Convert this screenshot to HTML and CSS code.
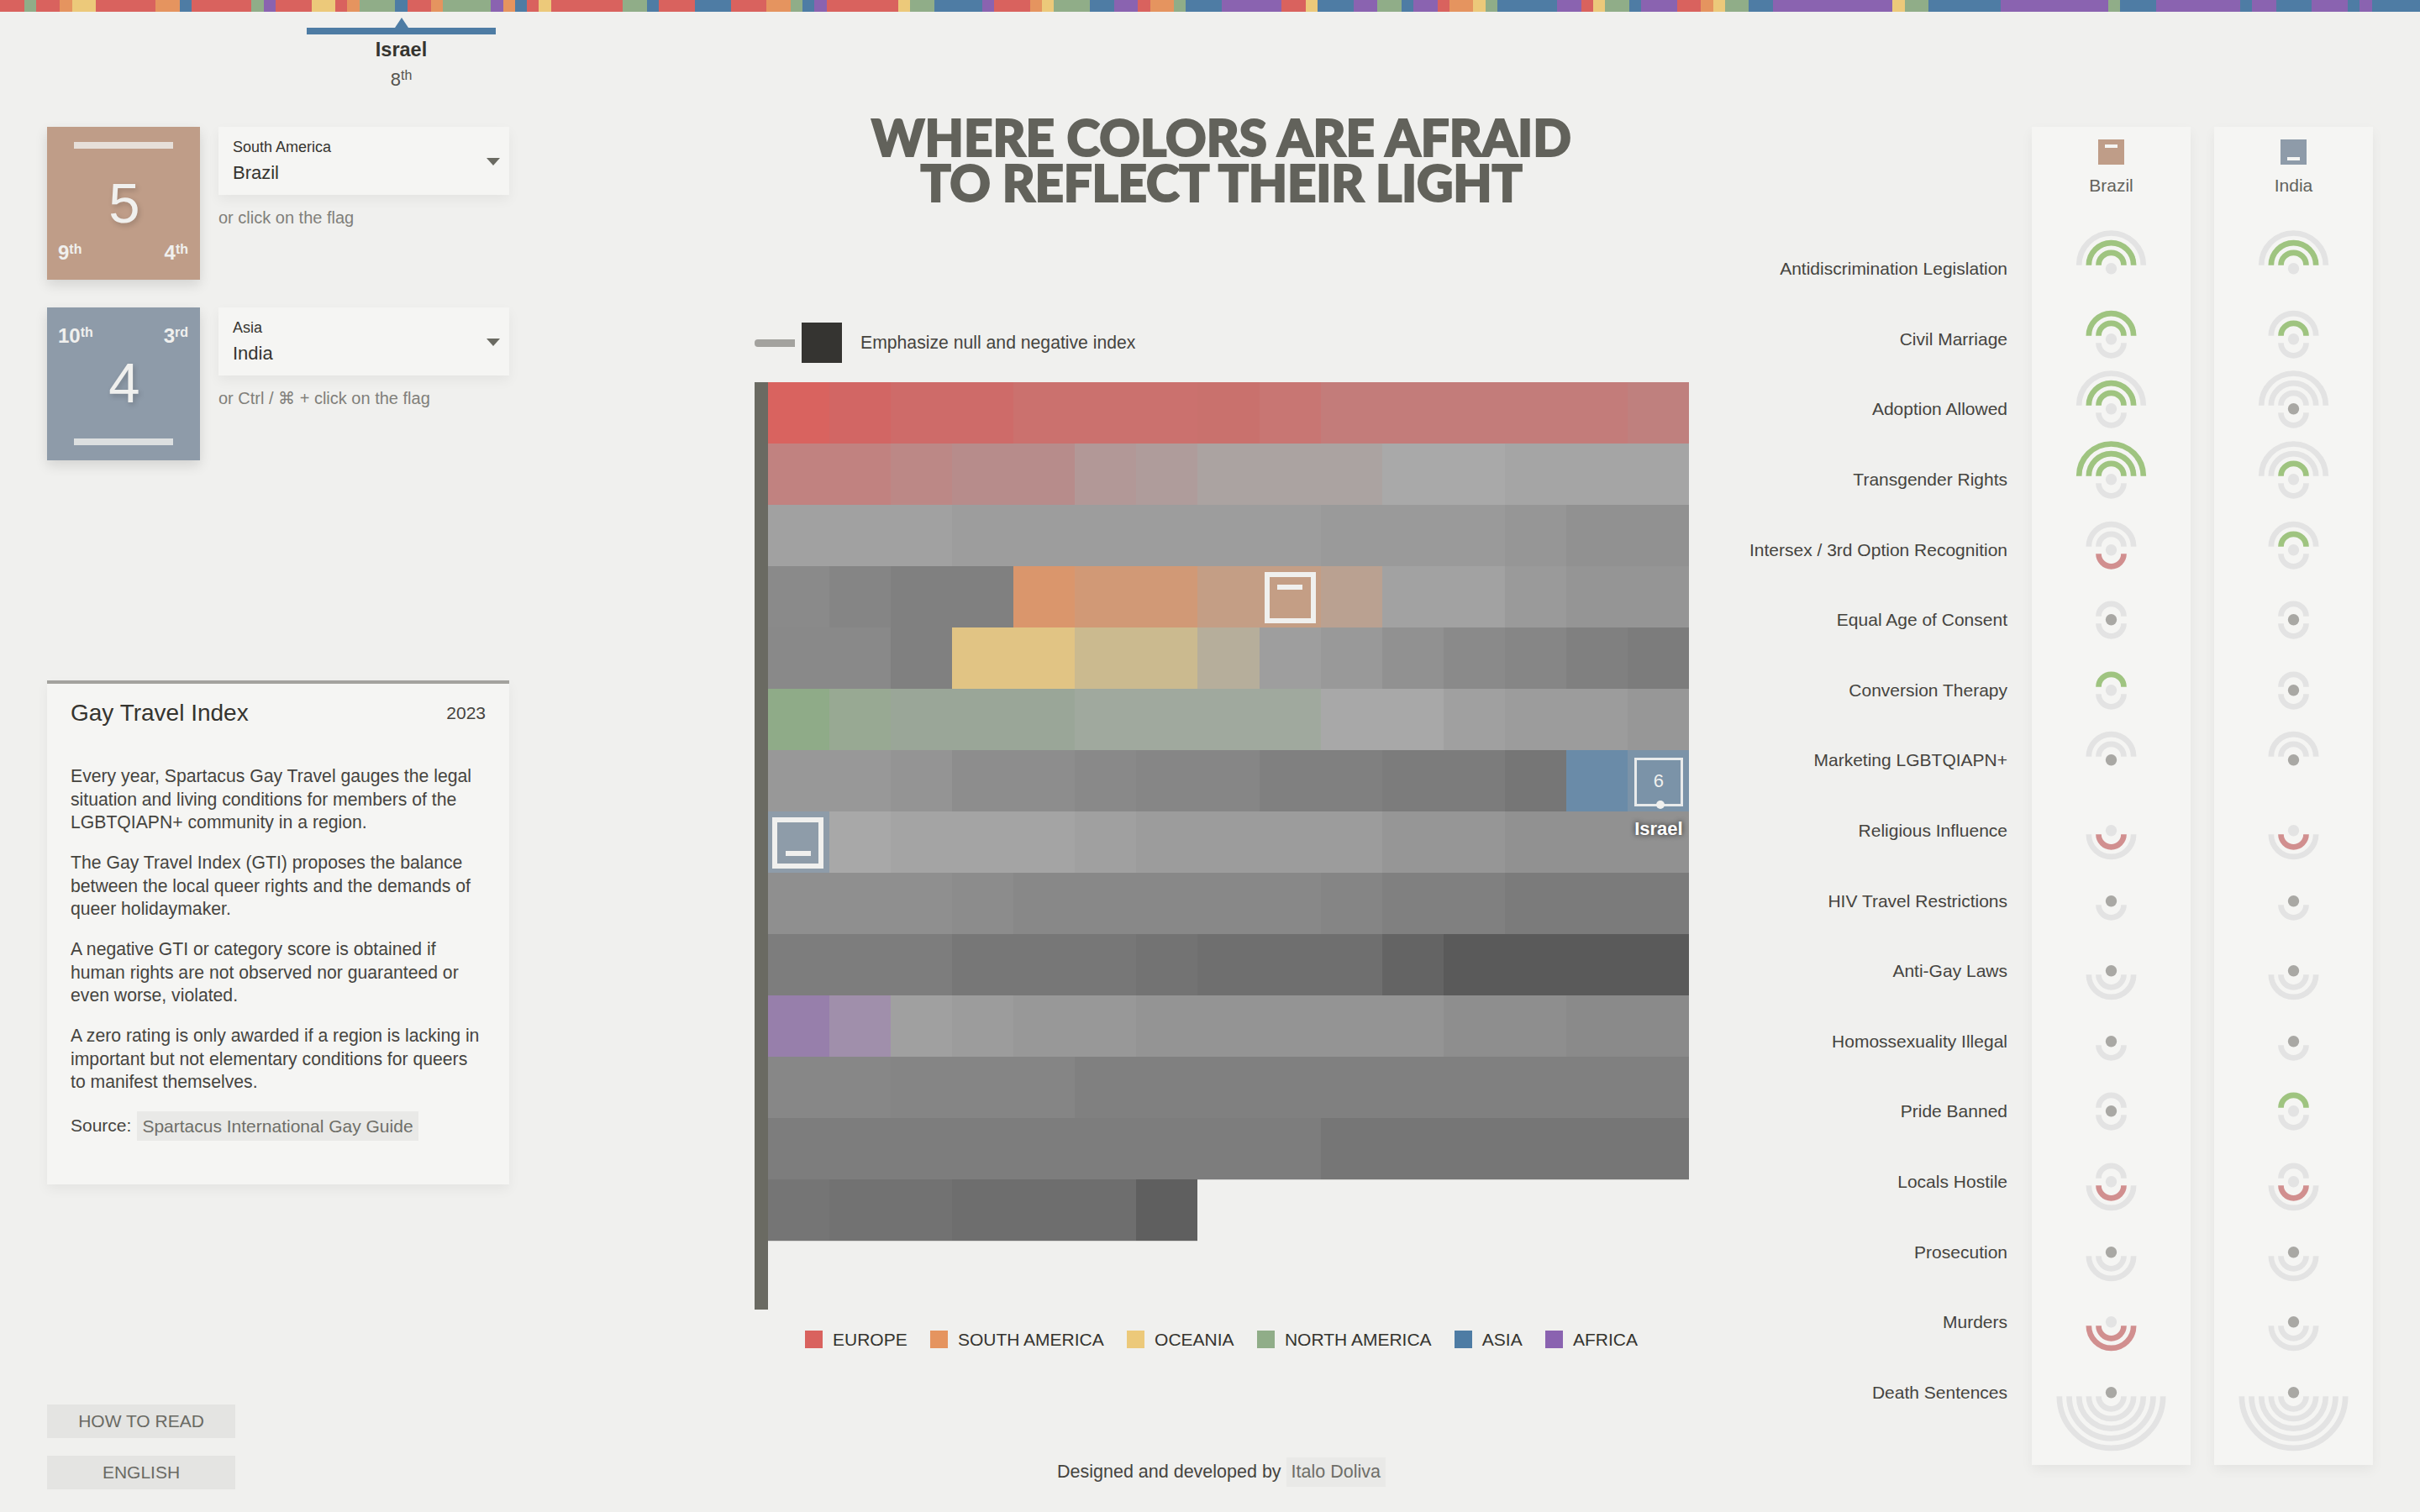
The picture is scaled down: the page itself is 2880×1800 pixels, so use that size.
FILE: index.html
```html
<!DOCTYPE html>
<html lang="en">
<head>
<meta charset="utf-8">
<title>Where colors are afraid to reflect their light</title>
<link rel="stylesheet" href="styles.css">
</head>
<body>
<svg class="defs" aria-hidden="true"><defs>
<path id="u1" d="M-15-4A15 15 0 0 1 15-4"/><path id="u2" d="M-26.67-4A26.67 26.67 0 0 1 26.67-4"/><path id="u3" d="M-38.33-4A38.33 38.33 0 0 1 38.33-4"/>
<path id="d1" d="M-15 4.5A15 15 0 0 0 15 4.5"/><path id="d2" d="M-26.67 4.5A26.67 26.67 0 0 0 26.67 4.5"/><path id="d3" d="M-38.33 4.5A38.33 38.33 0 0 0 38.33 4.5"/><path id="d4" d="M-50 4.5A50 50 0 0 0 50 4.5"/><path id="d5" d="M-61.67 4.5A61.67 61.67 0 0 0 61.67 4.5"/>
</defs></svg>

<div class="stripe">
<i class="r" style="flex-grow:2"></i><i class="g" style="flex-grow:1"></i><i class="r" style="flex-grow:2"></i><i class="o" style="flex-grow:1"></i><i class="y" style="flex-grow:2"></i><i class="r" style="flex-grow:5"></i><i class="o" style="flex-grow:2"></i><i class="b" style="flex-grow:1"></i><i class="r" style="flex-grow:5"></i><i class="g" style="flex-grow:1"></i><i class="p" style="flex-grow:1"></i><i class="r" style="flex-grow:3"></i><i class="y" style="flex-grow:2"></i><i class="r" style="flex-grow:1"></i><i class="o" style="flex-grow:1"></i><i class="g" style="flex-grow:3"></i><i class="b" style="flex-grow:1"></i><i class="r" style="flex-grow:2"></i><i class="o" style="flex-grow:1"></i><i class="g" style="flex-grow:4"></i><i class="p" style="flex-grow:1"></i><i class="o" style="flex-grow:1"></i><i class="b" style="flex-grow:1"></i><i class="r" style="flex-grow:1"></i><i class="y" style="flex-grow:1"></i><i class="r" style="flex-grow:6"></i><i class="g" style="flex-grow:2"></i><i class="b" style="flex-grow:1"></i><i class="r" style="flex-grow:3"></i><i class="b" style="flex-grow:3"></i><i class="r" style="flex-grow:3"></i><i class="o" style="flex-grow:2"></i><i class="g" style="flex-grow:1"></i><i class="b" style="flex-grow:1"></i><i class="p" style="flex-grow:1"></i><i class="r" style="flex-grow:6"></i><i class="y" style="flex-grow:1"></i><i class="g" style="flex-grow:2"></i><i class="b" style="flex-grow:4"></i><i class="p" style="flex-grow:1"></i><i class="r" style="flex-grow:3"></i><i class="o" style="flex-grow:1"></i><i class="y" style="flex-grow:1"></i><i class="g" style="flex-grow:3"></i><i class="b" style="flex-grow:2"></i><i class="p" style="flex-grow:2"></i><i class="r" style="flex-grow:1"></i><i class="o" style="flex-grow:2"></i><i class="g" style="flex-grow:1"></i><i class="b" style="flex-grow:3"></i><i class="p" style="flex-grow:5"></i><i class="r" style="flex-grow:2"></i><i class="y" style="flex-grow:1"></i><i class="b" style="flex-grow:3"></i><i class="p" style="flex-grow:2"></i><i class="g" style="flex-grow:2"></i><i class="b" style="flex-grow:1"></i><i class="p" style="flex-grow:2"></i><i class="r" style="flex-grow:1"></i><i class="o" style="flex-grow:2"></i><i class="y" style="flex-grow:1"></i><i class="g" style="flex-grow:1"></i><i class="b" style="flex-grow:5"></i><i class="p" style="flex-grow:2"></i><i class="r" style="flex-grow:1"></i><i class="y" style="flex-grow:1"></i><i class="g" style="flex-grow:2"></i><i class="b" style="flex-grow:1"></i><i class="p" style="flex-grow:3"></i><i class="r" style="flex-grow:2"></i><i class="o" style="flex-grow:1"></i><i class="y" style="flex-grow:1"></i><i class="g" style="flex-grow:2"></i><i class="b" style="flex-grow:2"></i><i class="p" style="flex-grow:10"></i><i class="y" style="flex-grow:1"></i><i class="g" style="flex-grow:2"></i><i class="b" style="flex-grow:6"></i><i class="p" style="flex-grow:9"></i><i class="g" style="flex-grow:1"></i><i class="b" style="flex-grow:3"></i><i class="p" style="flex-grow:7"></i><i class="b" style="flex-grow:1"></i><i class="p" style="flex-grow:2"></i><i class="b" style="flex-grow:3"></i><i class="p" style="flex-grow:3"></i><i class="b" style="flex-grow:1"></i><i class="p" style="flex-grow:1"></i><i class="b" style="flex-grow:4"></i>
</div>

<div class="marker">
  <div class="marker-tip"></div>
  <div class="marker-bar"></div>
  <div class="marker-name">Israel</div>
  <div class="marker-rank">8<sup>th</sup></div>
</div>

<main class="page">
  <aside class="left">
    <div class="pick">
      <div class="card card-a">
        <div class="card-dash"></div>
        <div class="card-num">5</div>
        <div class="card-ranks"><span>9<sup>th</sup></span><span>4<sup>th</sup></span></div>
      </div>
      <div class="pick-side">
        <div class="select"><div><div class="select-group">South America</div><div class="select-value">Brazil</div></div><div class="select-arrow"></div></div>
        <div class="hint">or click on the flag</div>
      </div>
    </div>
    <div class="pick pick-second">
      <div class="card card-b">
        <div class="card-ranks"><span>10<sup>th</sup></span><span>3<sup>rd</sup></span></div>
        <div class="card-num">4</div>
        <div class="card-dash"></div>
      </div>
      <div class="pick-side">
        <div class="select"><div><div class="select-group">Asia</div><div class="select-value">India</div></div><div class="select-arrow"></div></div>
        <div class="hint">or Ctrl / ⌘ + click on the flag</div>
      </div>
    </div>
    <section class="info">
      <header class="info-head"><h2>Gay Travel Index</h2><span>2023</span></header>
      <p>Every year, Spartacus Gay Travel gauges the legal situation and living conditions for members of the LGBTQIAPN+ community in a region.</p>
      <p>The Gay Travel Index (GTI) proposes the balance between the local queer rights and the demands of queer holidaymaker.</p>
      <p>A negative GTI or category score is obtained if human rights are not observed nor guaranteed or even worse, violated.</p>
      <p>A zero rating is only awarded if a region is lacking in important but not elementary conditions for queers to manifest themselves.</p>
      <div class="source">Source: <span class="chip">Spartacus International Gay Guide</span></div>
    </section>
    <div class="btn btn-first">HOW TO READ</div>
    <div class="btn">ENGLISH</div>
  </aside>

  <section class="center">
    <h1>WHERE COLORS ARE AFRAID<br><span class="title-second">TO REFLECT THEIR LIGHT</span></h1>
    <div class="toggle"><div class="toggle-track"></div><div class="toggle-knob"></div><span>Emphasize null and negative index</span></div>
    <div class="chart">
      <div class="axis"></div>
      <div class="grid">
<i style="background:#d9635f"></i><i style="background:#d26664"></i><i style="background:#ce6b69"></i><i style="background:#ce6b69"></i><i style="background:#cb716e"></i><i style="background:#cb716e"></i><i style="background:#cb716e"></i><i style="background:#c9716d"></i><i style="background:#c87673"></i><i style="background:#c37c7a"></i><i style="background:#c37c7a"></i><i style="background:#c37c7a"></i><i style="background:#c37c7a"></i><i style="background:#c37c7a"></i><i style="background:#bf807e"></i>
<i style="background:#c18280"></i><i style="background:#c18280"></i><i style="background:#bc8886"></i><i style="background:#b78c8b"></i><i style="background:#b78c8b"></i><i style="background:#b29897"></i><i style="background:#af9c9b"></i><i style="background:#aba3a1"></i><i style="background:#aba3a1"></i><i style="background:#aba3a1"></i><i style="background:#a9a9a9"></i><i style="background:#a9a9a9"></i><i style="background:#a5a5a5"></i><i style="background:#a5a5a5"></i><i style="background:#a5a5a5"></i>
<i style="background:#a1a1a1"></i><i style="background:#a1a1a1"></i><i style="background:#a1a1a1"></i><i style="background:#9d9d9d"></i><i style="background:#9d9d9d"></i><i style="background:#9d9d9d"></i><i style="background:#9d9d9d"></i><i style="background:#9d9d9d"></i><i style="background:#9d9d9d"></i><i style="background:#9a9a9a"></i><i style="background:#9a9a9a"></i><i style="background:#9a9a9a"></i><i style="background:#969696"></i><i style="background:#919191"></i><i style="background:#919191"></i>
<i style="background:#8a8a8a"></i><i style="background:#858585"></i><i style="background:#808080"></i><i style="background:#808080"></i><i style="background:#da966c"></i><i style="background:#d19976"></i><i style="background:#d19976"></i><i style="background:#c49e85"></i><i style="background:#c49e85"><span class="flag flag-a"><b></b></span></i><i style="background:#baa191"></i><i style="background:#a2a2a2"></i><i style="background:#a2a2a2"></i><i style="background:#9a9a9a"></i><i style="background:#959595"></i><i style="background:#959595"></i>
<i style="background:#898989"></i><i style="background:#898989"></i><i style="background:#808080"></i><i style="background:#e1c484"></i><i style="background:#e1c484"></i><i style="background:#cbba8f"></i><i style="background:#cbba8f"></i><i style="background:#b6ae9b"></i><i style="background:#9e9e9e"></i><i style="background:#999999"></i><i style="background:#919191"></i><i style="background:#8a8a8a"></i><i style="background:#868686"></i><i style="background:#808080"></i><i style="background:#7c7c7c"></i>
<i style="background:#8fab88"></i><i style="background:#98a993"></i><i style="background:#9aa698"></i><i style="background:#9aa698"></i><i style="background:#9aa698"></i><i style="background:#a0a99e"></i><i style="background:#a0a99e"></i><i style="background:#a0a99e"></i><i style="background:#a0a99e"></i><i style="background:#a8a8a8"></i><i style="background:#a8a8a8"></i><i style="background:#a0a0a0"></i><i style="background:#9c9c9c"></i><i style="background:#9c9c9c"></i><i style="background:#979797"></i>
<i style="background:#989898"></i><i style="background:#989898"></i><i style="background:#949494"></i><i style="background:#8d8d8d"></i><i style="background:#8d8d8d"></i><i style="background:#898989"></i><i style="background:#868686"></i><i style="background:#868686"></i><i style="background:#808080"></i><i style="background:#808080"></i><i style="background:#7c7c7c"></i><i style="background:#7c7c7c"></i><i style="background:#767676"></i><i style="background:#6a8ba8"></i><i style="background:#7b93a8"><span class="hover-box">6</span><span class="hover-dot"></span><span class="hover-name">Israel</span></i>
<i style="background:#8e9ca9"><span class="flag flag-b"><b></b></span></i><i style="background:#a8a8a8"></i><i style="background:#a4a4a4"></i><i style="background:#a4a4a4"></i><i style="background:#a4a4a4"></i><i style="background:#a0a0a0"></i><i style="background:#9c9c9c"></i><i style="background:#9c9c9c"></i><i style="background:#9c9c9c"></i><i style="background:#9c9c9c"></i><i style="background:#969696"></i><i style="background:#969696"></i><i style="background:#919191"></i><i style="background:#919191"></i><i style="background:#919191"></i>
<i style="background:#8f8f8f"></i><i style="background:#8f8f8f"></i><i style="background:#8f8f8f"></i><i style="background:#8c8c8c"></i><i style="background:#888888"></i><i style="background:#888888"></i><i style="background:#888888"></i><i style="background:#888888"></i><i style="background:#888888"></i><i style="background:#858585"></i><i style="background:#808080"></i><i style="background:#808080"></i><i style="background:#7b7b7b"></i><i style="background:#7b7b7b"></i><i style="background:#7b7b7b"></i>
<i style="background:#7d7d7d"></i><i style="background:#7d7d7d"></i><i style="background:#7d7d7d"></i><i style="background:#777777"></i><i style="background:#777777"></i><i style="background:#777777"></i><i style="background:#737373"></i><i style="background:#6f6f6f"></i><i style="background:#6f6f6f"></i><i style="background:#6f6f6f"></i><i style="background:#646464"></i><i style="background:#5a5a5a"></i><i style="background:#5a5a5a"></i><i style="background:#5a5a5a"></i><i style="background:#5a5a5a"></i>
<i style="background:#977fab"></i><i style="background:#a08fab"></i><i style="background:#a0a0a0"></i><i style="background:#9c9c9c"></i><i style="background:#989898"></i><i style="background:#989898"></i><i style="background:#949494"></i><i style="background:#949494"></i><i style="background:#949494"></i><i style="background:#949494"></i><i style="background:#949494"></i><i style="background:#8e8e8e"></i><i style="background:#8e8e8e"></i><i style="background:#8a8a8a"></i><i style="background:#8a8a8a"></i>
<i style="background:#878787"></i><i style="background:#878787"></i><i style="background:#858585"></i><i style="background:#858585"></i><i style="background:#858585"></i><i style="background:#808080"></i><i style="background:#808080"></i><i style="background:#808080"></i><i style="background:#808080"></i><i style="background:#808080"></i><i style="background:#808080"></i><i style="background:#808080"></i><i style="background:#808080"></i><i style="background:#808080"></i><i style="background:#808080"></i>
<i style="background:#7d7d7d"></i><i style="background:#7d7d7d"></i><i style="background:#7d7d7d"></i><i style="background:#7d7d7d"></i><i style="background:#7d7d7d"></i><i style="background:#7d7d7d"></i><i style="background:#7d7d7d"></i><i style="background:#7d7d7d" class="end"></i><i style="background:#7d7d7d" class="end"></i><i style="background:#767676" class="end"></i><i style="background:#767676" class="end"></i><i style="background:#767676" class="end"></i><i style="background:#767676" class="end"></i><i style="background:#767676" class="end"></i><i style="background:#767676" class="end"></i>
<i style="background:#757575" class="end"></i><i style="background:#727272" class="end"></i><i style="background:#727272" class="end"></i><i style="background:#6e6e6e" class="end"></i><i style="background:#6e6e6e" class="end"></i><i style="background:#6e6e6e" class="end"></i><i style="background:#5f5f5f" class="end"></i>
      </div>
    </div>
    <div class="legend">
      <span class="lg"><i class="r"></i>EUROPE</span><span class="lg"><i class="o"></i>SOUTH AMERICA</span><span class="lg"><i class="y"></i>OCEANIA</span><span class="lg"><i class="g"></i>NORTH AMERICA</span><span class="lg"><i class="b"></i>ASIA</span><span class="lg"><i class="p"></i>AFRICA</span>
    </div>
    <footer class="credit">Designed and developed by <span class="chip">Italo Doliva</span></footer>
  </section>

  <section class="right">
    <div class="labels">
      <div>Antidiscrimination Legislation</div><div>Civil Marriage</div><div>Adoption Allowed</div><div>Transgender Rights</div><div>Intersex / 3rd Option Recognition</div><div>Equal Age of Consent</div><div>Conversion Therapy</div><div>Marketing LGBTQIAPN+</div><div>Religious Influence</div><div>HIV Travel Restrictions</div><div>Anti-Gay Laws</div><div>Homossexuality Illegal</div><div>Pride Banned</div><div>Locals Hostile</div><div>Prosecution</div><div>Murders</div><div>Death Sentences</div>
    </div>
    <div class="column">
      <div class="col-head"><div class="mini mini-a"><b></b></div><div class="col-name">Brazil</div></div>
      <svg class="glyph" viewBox="-94.5 -41.8 189 83.6"><use href="#u3"/><use href="#u2" class="pos"/><use href="#u1" class="pos"/><circle r="6.7"/></svg>
      <svg class="glyph" viewBox="-94.5 -41.8 189 83.6"><use href="#u2" class="pos"/><use href="#u1" class="pos"/><use href="#d1"/><circle r="6.7"/></svg>
      <svg class="glyph" viewBox="-94.5 -41.8 189 83.6"><use href="#u3"/><use href="#u2" class="pos"/><use href="#u1" class="pos"/><use href="#d1"/><circle r="6.7"/></svg>
      <svg class="glyph" viewBox="-94.5 -41.8 189 83.6"><use href="#u3" class="pos"/><use href="#u2" class="pos"/><use href="#u1" class="pos"/><use href="#d1"/><circle r="6.7"/></svg>
      <svg class="glyph" viewBox="-94.5 -41.8 189 83.6"><use href="#u2"/><use href="#u1"/><use href="#d1" class="neg"/><circle r="6.7"/></svg>
      <svg class="glyph" viewBox="-94.5 -41.8 189 83.6"><use href="#u1"/><use href="#d1"/><circle class="zero" r="6.7"/></svg>
      <svg class="glyph" viewBox="-94.5 -41.8 189 83.6"><use href="#u1" class="pos"/><use href="#d1"/><circle r="6.7"/></svg>
      <svg class="glyph" viewBox="-94.5 -41.8 189 83.6"><use href="#u2"/><use href="#u1"/><circle class="zero" r="6.7"/></svg>
      <svg class="glyph" viewBox="-94.5 -41.8 189 83.6"><use href="#d2"/><use href="#d1" class="neg"/><circle r="6.7"/></svg>
      <svg class="glyph" viewBox="-94.5 -41.8 189 83.6"><use href="#d1"/><circle class="zero" r="6.7"/></svg>
      <svg class="glyph" viewBox="-94.5 -41.8 189 83.6"><use href="#d2"/><use href="#d1"/><circle class="zero" r="6.7"/></svg>
      <svg class="glyph" viewBox="-94.5 -41.8 189 83.6"><use href="#d1"/><circle class="zero" r="6.7"/></svg>
      <svg class="glyph" viewBox="-94.5 -41.8 189 83.6"><use href="#u1"/><use href="#d1"/><circle class="zero" r="6.7"/></svg>
      <svg class="glyph" viewBox="-94.5 -41.8 189 83.6"><use href="#u1"/><use href="#d2"/><use href="#d1" class="neg"/><circle r="6.7"/></svg>
      <svg class="glyph" viewBox="-94.5 -41.8 189 83.6"><use href="#d2"/><use href="#d1"/><circle class="zero" r="6.7"/></svg>
      <svg class="glyph" viewBox="-94.5 -41.8 189 83.6"><use href="#d2" class="neg"/><use href="#d1" class="neg"/><circle r="6.7"/></svg>
      <svg class="glyph" viewBox="-94.5 -41.8 189 83.6"><use href="#d5"/><use href="#d4"/><use href="#d3"/><use href="#d2"/><use href="#d1"/><circle class="zero" r="6.7"/></svg>
    </div>
    <div class="column">
      <div class="col-head"><div class="mini mini-b"><b></b></div><div class="col-name">India</div></div>
      <svg class="glyph" viewBox="-94.5 -41.8 189 83.6"><use href="#u3"/><use href="#u2" class="pos"/><use href="#u1" class="pos"/><circle r="6.7"/></svg>
      <svg class="glyph" viewBox="-94.5 -41.8 189 83.6"><use href="#u2"/><use href="#u1" class="pos"/><use href="#d1"/><circle r="6.7"/></svg>
      <svg class="glyph" viewBox="-94.5 -41.8 189 83.6"><use href="#u3"/><use href="#u2"/><use href="#u1"/><use href="#d1"/><circle class="zero" r="6.7"/></svg>
      <svg class="glyph" viewBox="-94.5 -41.8 189 83.6"><use href="#u3"/><use href="#u2"/><use href="#u1" class="pos"/><use href="#d1"/><circle r="6.7"/></svg>
      <svg class="glyph" viewBox="-94.5 -41.8 189 83.6"><use href="#u2"/><use href="#u1" class="pos"/><use href="#d1"/><circle r="6.7"/></svg>
      <svg class="glyph" viewBox="-94.5 -41.8 189 83.6"><use href="#u1"/><use href="#d1"/><circle class="zero" r="6.7"/></svg>
      <svg class="glyph" viewBox="-94.5 -41.8 189 83.6"><use href="#u1"/><use href="#d1"/><circle class="zero" r="6.7"/></svg>
      <svg class="glyph" viewBox="-94.5 -41.8 189 83.6"><use href="#u2"/><use href="#u1"/><circle class="zero" r="6.7"/></svg>
      <svg class="glyph" viewBox="-94.5 -41.8 189 83.6"><use href="#d2"/><use href="#d1" class="neg"/><circle r="6.7"/></svg>
      <svg class="glyph" viewBox="-94.5 -41.8 189 83.6"><use href="#d1"/><circle class="zero" r="6.7"/></svg>
      <svg class="glyph" viewBox="-94.5 -41.8 189 83.6"><use href="#d2"/><use href="#d1"/><circle class="zero" r="6.7"/></svg>
      <svg class="glyph" viewBox="-94.5 -41.8 189 83.6"><use href="#d1"/><circle class="zero" r="6.7"/></svg>
      <svg class="glyph" viewBox="-94.5 -41.8 189 83.6"><use href="#u1" class="pos"/><use href="#d1"/><circle r="6.7"/></svg>
      <svg class="glyph" viewBox="-94.5 -41.8 189 83.6"><use href="#u1"/><use href="#d2"/><use href="#d1" class="neg"/><circle r="6.7"/></svg>
      <svg class="glyph" viewBox="-94.5 -41.8 189 83.6"><use href="#d2"/><use href="#d1"/><circle class="zero" r="6.7"/></svg>
      <svg class="glyph" viewBox="-94.5 -41.8 189 83.6"><use href="#d2"/><use href="#d1"/><circle class="zero" r="6.7"/></svg>
      <svg class="glyph" viewBox="-94.5 -41.8 189 83.6"><use href="#d5"/><use href="#d4"/><use href="#d3"/><use href="#d2"/><use href="#d1"/><circle class="zero" r="6.7"/></svg>
    </div>
  </section>
</main>
</body>
</html>
```
FILE: styles.css
```css
* { box-sizing: border-box; }
html, body { margin: 0; padding: 0; }
body {
  width: 2880px;
  height: 1800px;
  overflow: hidden;
  position: relative;
  background: #f0f0ee;
  color: #45443f;
  font-family: "Liberation Sans", Arial, sans-serif;
  font-size: 21px;
}
.defs { position: absolute; width: 0; height: 0; }
.r { background: #d9625e; }
.o { background: #e5945f; }
.y { background: #ecc97a; }
.g { background: #90ad88; }
.b { background: #4e7ca4; }
.p { background: #8a63b0; }
sup { font-size: 16px; line-height: 0; vertical-align: 7px; font-weight: inherit; }

.stripe { display: flex; height: 14px; }
.stripe i { display: block; flex-basis: 0; }

.marker { position: absolute; left: 365px; top: 21px; width: 225px; text-align: center; }
.marker-tip { width: 0; height: 0; margin: 0 auto; border: solid transparent; border-width: 0 8px 12px; border-bottom-color: #4e7ca4; }
.marker-bar { height: 8px; background: #4e7ca4; }
.marker-name { margin-top: 4px; font-size: 23.5px; font-weight: 700; line-height: 28px; color: #35342f; }
.marker-rank { margin-top: 9px; font-size: 22px; line-height: 26px; color: #55544e; }

.page { display: flex; align-items: flex-start; height: 1786px; }

.left { width: 550px; margin-left: 56px; padding-top: 137px; flex: none; }
.pick { display: flex; gap: 22px; }
.pick-second { margin-top: 33px; }
.card { width: 182px; height: 182px; padding: 18px 14px 18px 13px; color: #f0f0ee; display: flex; flex-direction: column; box-shadow: 0 6px 14px rgba(0,0,0,.12); }
.card-a { background: #bf9d88; }
.card-b { background: #8e9ba9; }
.card-dash { width: 118px; height: 8px; margin: 0 auto; background: rgba(240,240,238,.8); flex: none; }
.card-num { font-size: 67px; line-height: 70px; text-align: center; padding-left: 3px; text-shadow: 2px 3px 6px rgba(0,0,0,.18); }
.card-ranks { display: flex; justify-content: space-between; font-size: 24px; font-weight: 700; line-height: 30px; }
.card-a .card-num { margin-top: 30px; }
.card-a .card-ranks { margin-top: 9px; }
.card-b { padding-top: 19px; }
.card-b .card-num { margin-top: 6px; }
.card-b .card-dash { margin-top: 31px; }
.pick-side { width: 346px; }
.select { height: 81px; padding: 12px 11px 0 17px; background: #f5f5f3; display: flex; justify-content: space-between; box-shadow: 0 6px 14px rgba(0,0,0,.05); }
.select-group { font-size: 18px; line-height: 24px; color: #35342f; }
.select-value { margin-top: 6px; font-size: 22px; line-height: 26px; color: #35342f; }
.select-arrow { width: 0; height: 0; margin-top: 25px; border: solid transparent; border-width: 9px 8.5px 0; border-top-color: #6a6a62; }
.hint { margin-top: 15px; font-size: 20px; line-height: 24px; color: #807f7a; }

.info { margin-top: 262px; height: 600px; padding: 18px 28px 0; background: #f5f5f3; border-top: 4px solid #a3a29e; box-shadow: 0 6px 14px rgba(0,0,0,.05); }
.info-head { display: flex; justify-content: space-between; align-items: center; height: 34px; margin-bottom: 44px; }
.info-head h2 { margin: 0; font-size: 28px; font-weight: 400; color: #35342f; }
.info p { margin: 0 0 20.5px; padding-right: 5px; font-size: 21.2px; line-height: 27.5px; }
.source { display: flex; align-items: center; gap: 7px; height: 35px; margin-top: 21px; }
.chip { display: inline-block; height: 35px; padding: 0 6px; line-height: 35px; background: #e9e9e7; color: #6e6e68; }

.btn { width: 224px; height: 40px; line-height: 40px; margin-top: 21px; text-align: center; background: #e4e4e2; color: #6a6a64; }
.btn-first { margin-top: 262px; }

.center { width: 1111px; margin-left: 292px; flex: none; }
h1 { margin: 122px 0 0; text-align: center; font-family: Lato, sans-serif; font-weight: 900; font-size: 60px; line-height: 54px; color: #62625b; letter-spacing: 0.1px; -webkit-text-stroke: 2px #62625b; }
.title-second { letter-spacing: -0.2px; }
.toggle { display: flex; align-items: center; height: 48px; margin-top: 140px; }
.toggle-track { width: 48px; height: 9px; border-radius: 4px 0 0 4px; background: #a3a29e; }
.toggle-knob { width: 48px; height: 48px; margin-left: 8px; background: #353431; }
.toggle span { margin-left: 22px; font-size: 21.2px; }
.chart { display: flex; height: 1104px; margin-top: 23px; }
.axis { width: 16px; background: #6a6a62; flex: none; }
.grid { display: grid; grid-template-columns: repeat(15, 73.07px); grid-auto-rows: 73.04px; align-content: start; }
.grid i { display: block; position: relative; }
.grid .end { box-shadow: 0 1px 0 #d8d8d6; }
.flag { position: absolute; display: flex; justify-content: center; background: inherit; border: 6px solid #f0f0ee; width: 61px; height: 61px; }
.flag-a { left: 6px; top: 7px; }
.flag-b { left: 5px; top: 7px; align-items: flex-end; }
.flag b { display: block; width: 30px; height: 6px; background: #f0f0ee; margin: 9px 0; }
.hover-box { position: absolute; left: 8px; top: 9px; width: 58px; height: 58px; border: 3px solid #e9ebeb; color: #f0f0ee; font-style: normal; text-align: center; line-height: 50px; font-size: 22px; }
.hover-dot { position: absolute; left: 34px; top: 60px; width: 10px; height: 10px; border-radius: 50%; background: #f0f0ee; }
.hover-name { position: absolute; left: 8px; top: 81px; width: 58px; text-align: center; line-height: 26px; font-style: normal; font-weight: 700; font-size: 22px; color: #fff; text-shadow: 0 0 6px rgba(0,0,0,.8); z-index: 2; }
.legend { display: flex; justify-content: center; gap: 27.3px; margin-top: 25px; height: 21px; font-size: 21px; line-height: 21px; color: #35342f; }
.lg { display: flex; align-items: center; }
.lg i { display: block; width: 21px; height: 21px; margin-right: 12px; }
.credit { margin-top: 130px; text-align: center; line-height: 35px; font-size: 21.5px; }

.right { display: flex; margin-left: auto; margin-right: 56px; flex: none; }
.labels { padding-top: 264.2px; padding-right: 29px; text-align: right; }
.labels div { height: 83.6px; line-height: 83.6px; }
.column { width: 189px; height: 1593px; margin-top: 137px; background: #f5f5f3; box-shadow: 0 6px 14px rgba(0,0,0,.05); }
.column + .column { margin-left: 28px; }
.col-head { height: 127.2px; padding-top: 15px; text-align: center; }
.mini { width: 31px; height: 30px; margin: 0 auto; display: flex; justify-content: center; padding: 5.5px 0; }
.mini b { display: block; width: 15px; height: 4px; background: #f5f5f3; }
.mini-a { background: #bf9d88; }
.mini-b { background: #8e9ba9; align-items: flex-end; }
.col-name { margin-top: 13px; line-height: 24px; color: #62625c; }
.glyph { display: block; width: 189px; height: 83.6px; overflow: visible; fill: none; stroke: #e3e3e3; stroke-width: 6.67px; }
.glyph circle { fill: #e3e3e3; stroke: none; }
.glyph .zero { fill: #a9a8a4; }
.glyph .pos { stroke: #9fc480; }
.glyph .neg { stroke: #d18f8f; }
```
